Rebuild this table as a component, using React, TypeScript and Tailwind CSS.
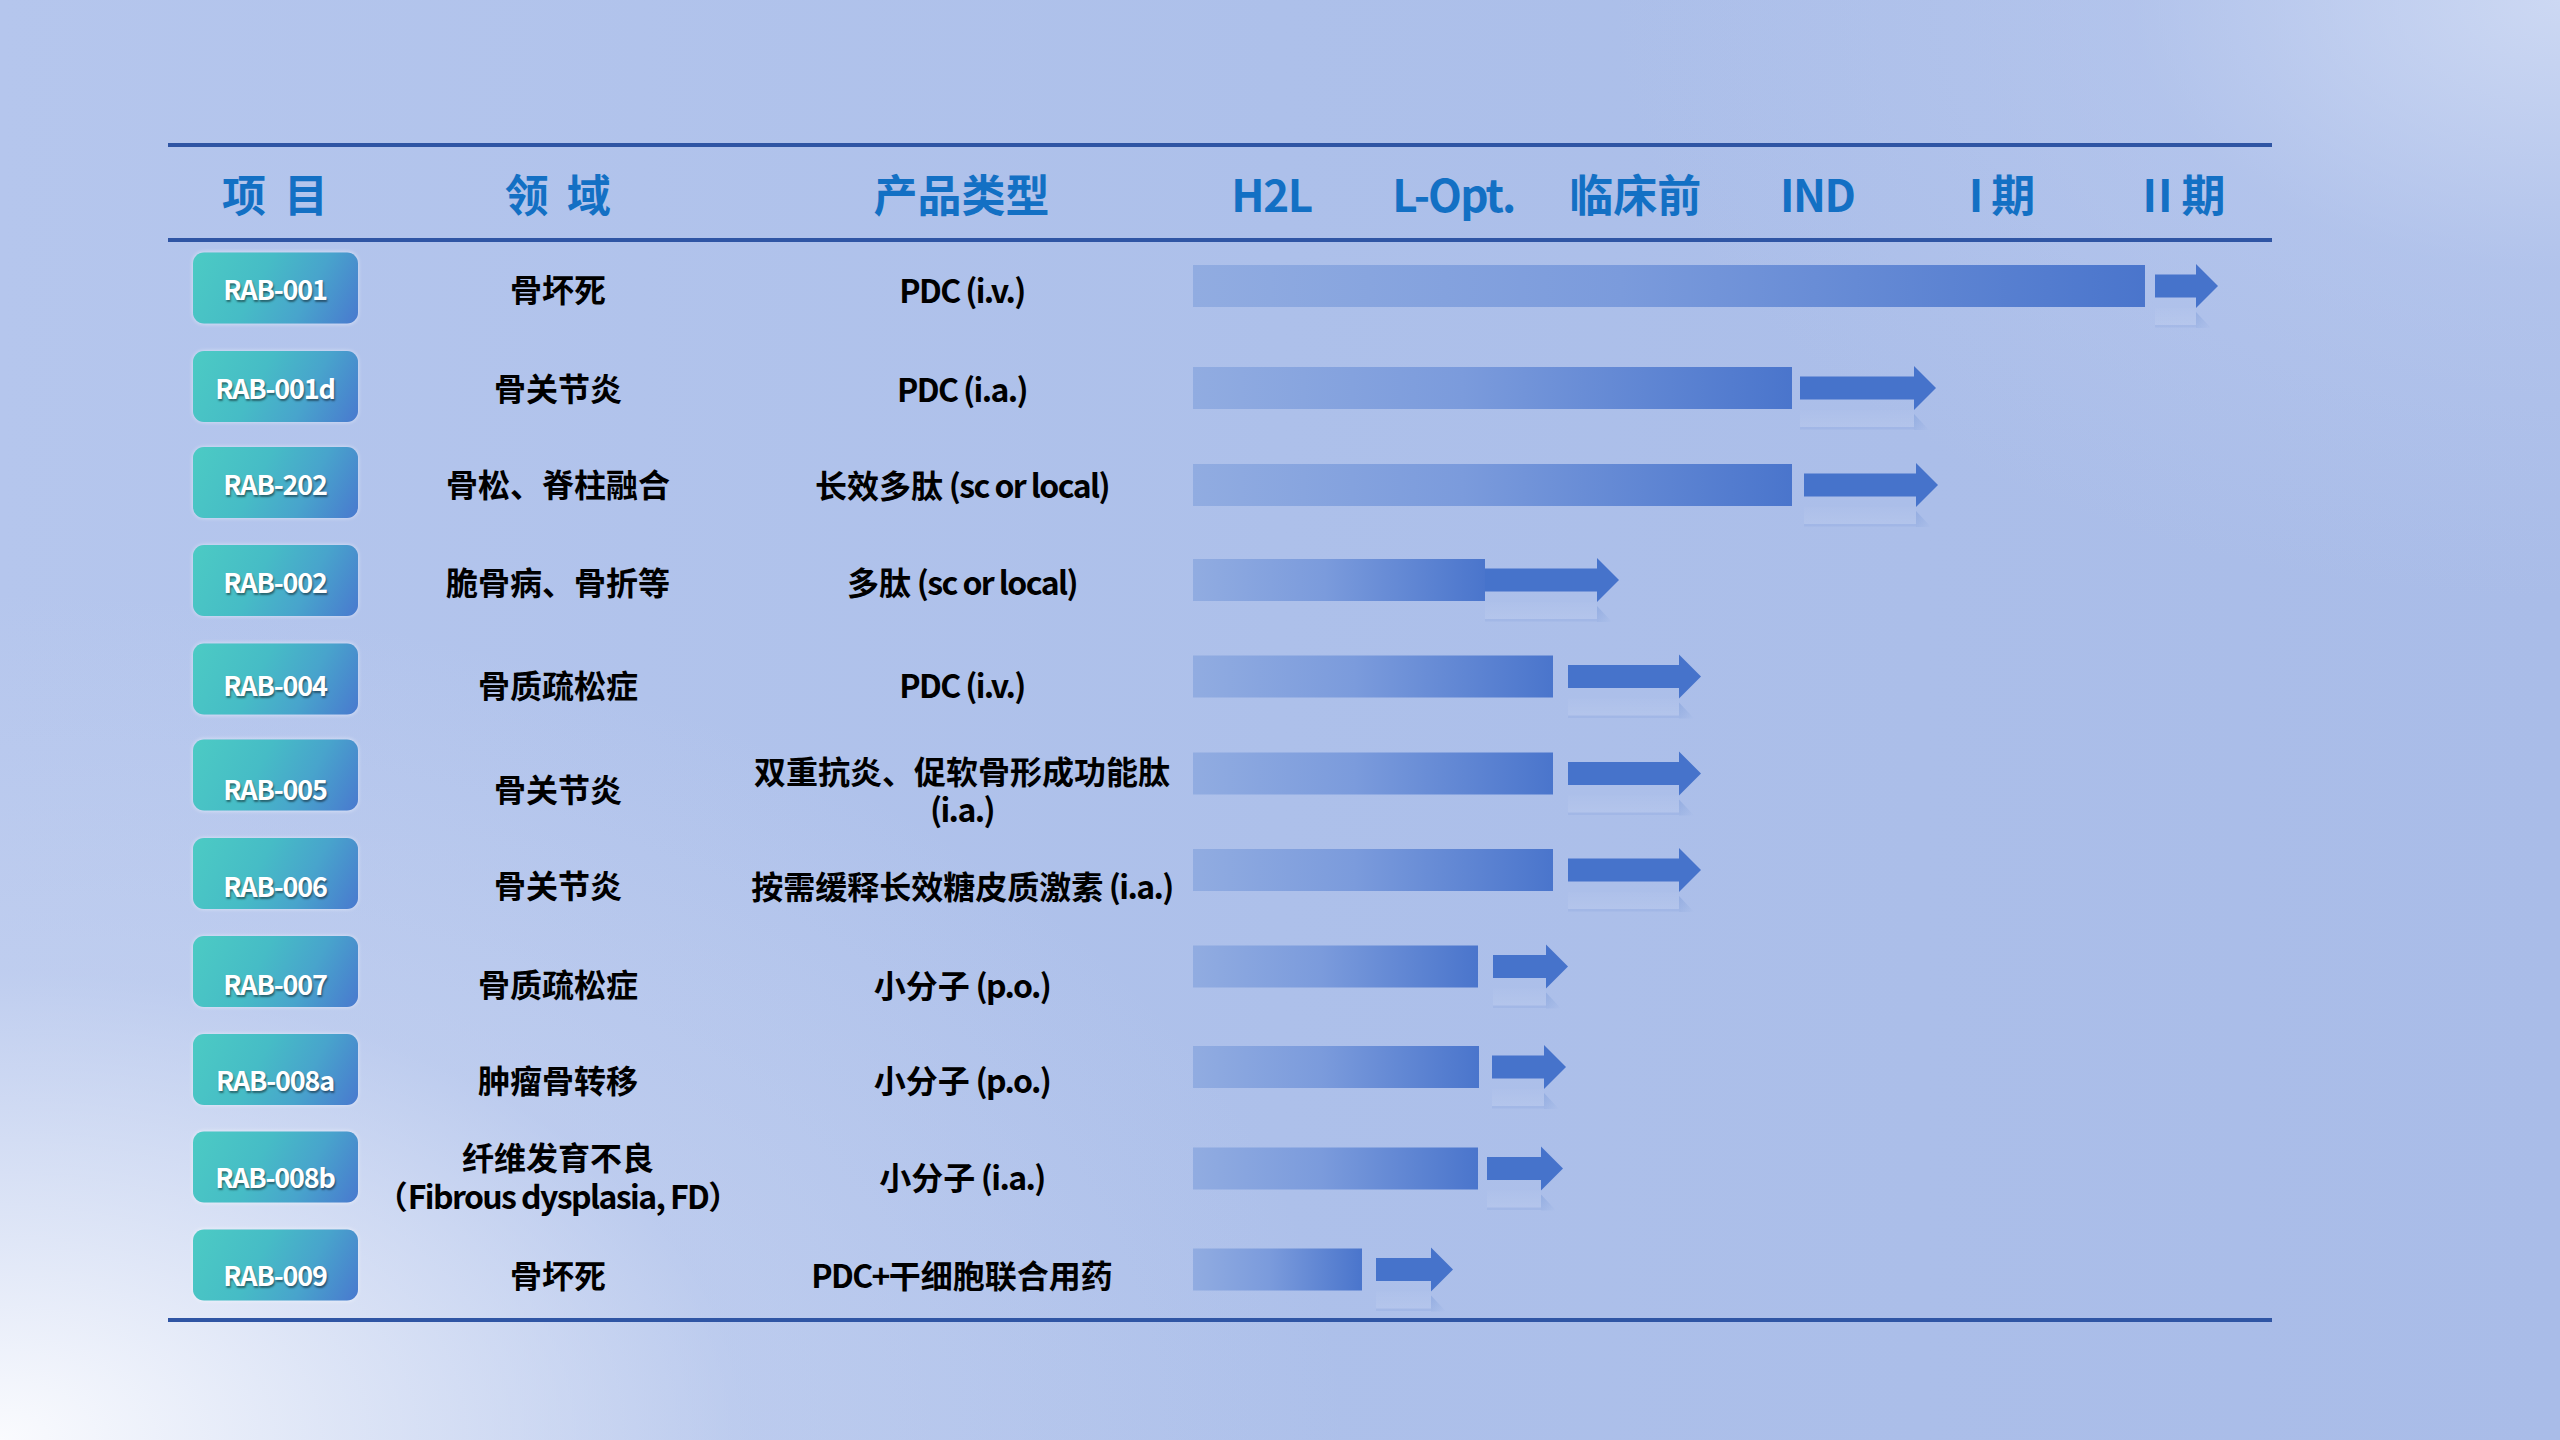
import React from "react";

type Row = {
  id: string;
  domain: string[];
  product: string[];
  bar: number;
  gap: number;
  len: number;
  by: number;
  ty: number;
  bo: number;
  bt: number;
};

const rows: Row[] = [
  { id: "RAB-001", domain: ["骨坏死"], product: ["PDC (i.v.)"], bar: 952, gap: 10, len: 63, by: -5, ty: -2, bo: -2.5, bt: 0.5 },
  { id: "RAB-001d", domain: ["骨关节炎"], product: ["PDC (i.a.)"], bar: 599, gap: 8, len: 136, by: -1, ty: -1.5, bo: -2, bt: 0.5 },
  { id: "RAB-202", domain: ["骨松、脊柱融合"], product: ["长效多肽 (sc or local)"], bar: 599, gap: 12, len: 134, by: -2, ty: -3.5, bo: -4, bt: 0.5 },
  { id: "RAB-002", domain: ["脆骨病、骨折等"], product: ["多肽 (sc or local)"], bar: 292, gap: 0, len: 134, by: -4, ty: -3.5, bo: -4, bt: 0.5 },
  { id: "RAB-004", domain: ["骨质疏松症"], product: ["PDC (i.v.)"], bar: 360, gap: 15, len: 133, by: -5.5, ty: 2, bo: -3.5, bt: 5.5 },
  { id: "RAB-005", domain: ["骨关节炎"], product: ["双重抗炎、促软骨形成功能肽", "(i.a.)"], bar: 360, gap: 15, len: 133, by: -6.5, ty: 9, bo: -4.5, bt: 13.5 },
  { id: "RAB-006", domain: ["骨关节炎"], product: ["按需缓释长效糖皮质激素 (i.a.)"], bar: 360, gap: 15, len: 133, by: -8, ty: 7, bo: -4, bt: 11.5 },
  { id: "RAB-007", domain: ["骨质疏松症"], product: ["小分子 (p.o.)"], bar: 285, gap: 15, len: 75, by: -9.5, ty: 7.5, bo: -4, bt: 11.5 },
  { id: "RAB-008a", domain: ["肿瘤骨转移"], product: ["小分子 (p.o.)"], bar: 286, gap: 13, len: 74, by: -6, ty: 5.5, bo: -4, bt: 9.5 },
  { id: "RAB-008b", domain: ["纤维发育不良", "（Fibrous dysplasia, FD）"], product: ["小分子 (i.a.)"], bar: 285, gap: 9, len: 76, by: -2.5, ty: 5, bo: -4.5, bt: 9.5 },
  { id: "RAB-009", domain: ["骨坏死"], product: ["PDC+干细胞联合用药"], bar: 169, gap: 14, len: 77, by: 0.5, ty: 5, bo: -4.5, bt: 9.5 },
];

function Mixed({ text }: { text: string }) {
  const parts = text.split(/([\x20-\x7E]+)/).filter((p) => p.length > 0);
  return (
    <>
      {parts.map((p, i) =>
        /^[\x20-\x7E]+$/.test(p) ? (
          <span key={i} className="tracking-[-1.6px]">
            {p}
          </span>
        ) : (
          <span key={i}>{p}</span>
        )
      )}
    </>
  );
}

function Arrow({ len, id }: { len: number; id: string }) {
  const h = 44;
  const head = 22;
  const shaftTop = 10.5;
  const shaftBot = 33.5;
  const hx = len - head;
  const gid = "rf-" + id;
  const gid2 = "rh-" + id;
  return (
    <svg width={len} height={h} viewBox={`0 0 ${len} ${h}`} className="overflow-visible shrink-0">
      <defs>
        <linearGradient id={gid} x1="0" y1="0" x2="0" y2="1">
          <stop offset="0" stopColor="#ffffff" stopOpacity="0.02" />
          <stop offset="1" stopColor="#ffffff" stopOpacity="0.09" />
        </linearGradient>
        <linearGradient id={gid2} x1="0" y1="0" x2="1" y2="1">
          <stop offset="0" stopColor="#4472c4" stopOpacity="0.22" />
          <stop offset="1" stopColor="#4472c4" stopOpacity="0" />
        </linearGradient>
      </defs>
      <rect x={0} y={h} width={hx} height={17} fill={`url(#${gid})`} />
      <rect x={0} y={h + 17} width={hx} height={2.5} fill="#4472c4" opacity="0.09" />
      <polygon points={`${hx},${h + 4} ${hx + 15},${h + 20} ${hx},${h + 20}`} fill={`url(#${gid2})`} />
      <polygon
        points={`0,${shaftTop} ${hx},${shaftTop} ${hx},0 ${len},${h / 2} ${hx},${h} ${hx},${shaftBot} 0,${shaftBot}`}
        fill="#4673cb"
      />
    </svg>
  );
}

export default function App() {
  return (
    <div className="w-[2560px] h-[1440px] overflow-hidden font-['Noto_Sans_CJK_SC','Noto_Sans',sans-serif] [background-image:radial-gradient(ellipse_1350px_850px_at_0%_100%,rgba(250,251,254,1)_0%,rgba(232,237,249,0.8)_25%,rgba(205,216,242,0.4)_55%,rgba(180,198,236,0)_100%),radial-gradient(ellipse_950px_600px_at_100%_0%,rgba(208,219,244,0.9)_0%,rgba(190,205,240,0.4)_45%,rgba(170,189,232,0)_100%),linear-gradient(90deg,#b5c6ed_0%,#adc0ea_50%,#a9bce8_100%)]">
      <div className="ml-[168px] pt-[143px] w-[2104px]">
        <div className="h-[4px] bg-[#2f55a4]" />
        <div className="h-[91px] flex items-center text-[44px] leading-none font-bold text-[#1370c4]">
          <div className="w-[214px] flex justify-center gap-[18px]">
            <span>项</span>
            <span>目</span>
          </div>
          <div className="w-[352px] flex justify-center gap-[18px]">
            <span>领</span>
            <span>域</span>
          </div>
          <div className="w-[447px] pl-[9px] text-center">产品类型</div>
          <div className="w-[182px] text-center tracking-[-1.5px]">H2L</div>
          <div className="w-[182px] text-center tracking-[-1.8px]">L-Opt.</div>
          <div className="w-[182px] text-center">临床前</div>
          <div className="w-[182px] text-center tracking-[-1.5px]">IND</div>
          <div className="w-[182px] flex justify-center gap-[8px] pl-[6px]">
            <span>I</span>
            <span>期</span>
          </div>
          <div className="w-[182px] flex justify-center gap-[8px] pl-[6px]">
            <span className="tracking-[1px]">II</span>
            <span>期</span>
          </div>
        </div>
        <div className="h-[4px] bg-[#2f55a4]" />
        <div className="h-[1076px] grid grid-rows-[repeat(11,1fr)]">
          {rows.map((r) => (
            <div key={r.id} className="flex items-center">
              <div className="w-[214px] flex justify-center">
                <div
                  className="w-[165px] h-[71px] rounded-[11px] flex items-center justify-center bg-[linear-gradient(118deg,#4ccbc4_0%,#46bcc6_40%,#48a4cc_68%,#4979cf_100%)] shadow-[0_0_4px_rgba(255,255,255,0.55)]"
                  style={{ transform: `translateY(${r.bo}px)` }}
                >
                  <span
                    className="text-white font-bold text-[27px] leading-none tracking-[-1.2px] [text-shadow:1px_2px_2px_rgba(0,0,0,0.45)]"
                    style={{ transform: `translateY(${r.bt}px)` }}
                  >
                    {r.id}
                  </span>
                </div>
              </div>
              <div
                className="w-[352px] flex flex-col items-center text-[32px] leading-[39px] font-bold text-black"
                style={{ transform: `translateY(${r.ty}px)` }}
              >
                {r.domain.map((d) => (
                  <span key={d} className="whitespace-nowrap">
                    <Mixed text={d} />
                  </span>
                ))}
              </div>
              <div
                className="w-[456px] flex flex-col items-center text-[32px] leading-[38px] font-bold text-black"
                style={{ transform: `translateY(${r.ty}px)` }}
              >
                {r.product.map((d) => (
                  <span key={d} className="whitespace-nowrap">
                    <Mixed text={d} />
                  </span>
                ))}
              </div>
              <div className="flex-1 flex items-center pl-[3px]" style={{ transform: `translateY(${r.by}px)` }}>
                <div
                  className="h-[42px] shrink-0 bg-[linear-gradient(90deg,#91ace1_0%,#7b9bdc_45%,#4a75cc_100%)]"
                  style={{ width: r.bar }}
                />
                <div className="shrink-0" style={{ width: r.gap }} />
                <Arrow len={r.len} id={r.id} />
              </div>
            </div>
          ))}
        </div>
        <div className="h-[4px] bg-[#2f55a4]" />
      </div>
    </div>
  );
}
